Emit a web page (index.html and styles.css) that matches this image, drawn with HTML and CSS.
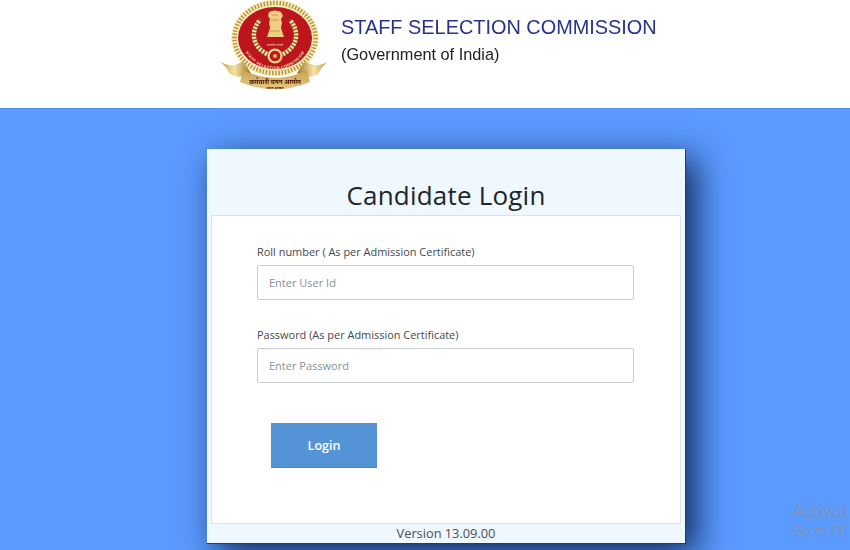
FILE: index.html
```html
<!DOCTYPE html>
<html lang="en">
<head>
<meta charset="utf-8">
<title>Candidate Login</title>
<link rel="stylesheet" href="styles.css">
</head>
<body>
<header class="banner">
  <svg class="emblem" viewBox="0 0 110 92" width="110" height="92" aria-hidden="true">
    <defs>
      <linearGradient id="tailL" x1="0" x2="1" y1="0" y2="0">
        <stop offset="0" stop-color="#c9a04a"/><stop offset=".45" stop-color="#f6e3a6"/><stop offset="1" stop-color="#9c7428"/>
      </linearGradient>
      <linearGradient id="tailR" x1="1" x2="0" y1="0" y2="0">
        <stop offset="0" stop-color="#c9a04a"/><stop offset=".45" stop-color="#f6e3a6"/><stop offset="1" stop-color="#9c7428"/>
      </linearGradient>
      <linearGradient id="band" x1="0" x2="0" y1="0" y2="1">
        <stop offset="0" stop-color="#c9a14e"/><stop offset="1" stop-color="#e6ca84"/>
      </linearGradient>
      <path id="ring" d="M23 38 A33 31 0 0 0 89 38"/>
    </defs>
    <ellipse cx="56" cy="38" rx="44" ry="38.5" fill="#f8ecbd"/>
    <ellipse cx="56" cy="38" rx="40.5" ry="35" fill="none" stroke="#b3963f" stroke-width="4.5" stroke-dasharray="1.5 1.7"/>
    <ellipse cx="56" cy="38" rx="37" ry="31" fill="#bd151c"/>
    <g fill="none" stroke-linecap="round">
      <path d="M40 21 C31 33 34 47 48 54" stroke="#8a5a1e" stroke-width="4.4"/>
      <path d="M72 21 C81 33 78 47 64 54" stroke="#8a5a1e" stroke-width="4.4"/>
      <path d="M40 21 C31 33 34 47 48 54" stroke="#f4e2ae" stroke-width="4.4" stroke-dasharray="2 1.4" stroke-linecap="butt"/>
      <path d="M72 21 C81 33 78 47 64 54" stroke="#f4e2ae" stroke-width="4.4" stroke-dasharray="2 1.4" stroke-linecap="butt"/>
    </g>
    <path d="M50 12 q6 -3 12 0 l2 4 -2 3 1 4 -1 5 3 9 h-17 l3 -9 -1 -5 1 -4 -2 -3z" fill="#f0cf85"/>
    <path d="M53 15 h6 M52 20 h8 M51 31 h10" stroke="#c79a45" stroke-width="1"/>
    <text class="seal" x="56" y="46" text-anchor="middle">सत्यमेव जयते</text>
    <circle cx="56" cy="56" r="7.6" fill="#edd28c"/>
    <circle cx="56" cy="56" r="5.3" fill="#b8181c"/>
    <circle cx="56" cy="56" r="2.1" fill="#e9b24e"/>
    <text class="seal-ring"><textPath href="#ring" startOffset="50%" text-anchor="middle">STAFF SELECTION COMMISSION</textPath></text>
    <path d="M2 62 Q12 69 24 61 L32 73 Q20 80 11 74 Q8 68 2 62z" fill="url(#tailL)"/>
    <path d="M108 62 Q98 69 86 61 L78 73 Q90 80 99 74 Q102 68 108 62z" fill="url(#tailR)"/>
    <path d="M24 70 Q56 86 88 70 L91 82 Q56 97 21 82z" fill="url(#band)"/>
    <text class="motto" x="56" y="84" text-anchor="middle">कर्मचारी चयन आयोग</text>
    <text class="motto-sub" x="56" y="88.5" text-anchor="middle">भारत सरकार</text>
  </svg>
  <div class="org">
    <div class="org-name">STAFF SELECTION COMMISSION</div>
    <div class="org-sub">(Government of India)</div>
  </div>
</header>
<main class="stage">
  <section class="card">
    <h1 class="card-title">Candidate Login</h1>
    <form class="panel">
      <div class="field">
        <label class="field-label" for="uid">Roll number ( As per Admission Certificate)</label>
        <input class="field-input" id="uid" type="text" placeholder="Enter User Id">
      </div>
      <div class="field">
        <label class="field-label" for="pwd">Password (As per Admission Certificate)</label>
        <input class="field-input" id="pwd" type="password" placeholder="Enter Password">
      </div>
      <button class="login" type="button">Login</button>
    </form>
    <footer class="version">Version 13.09.00</footer>
  </section>
</main>
<div class="activate">
  <div class="activate-big">Activat</div>
  <div class="activate-small">Go to PC</div>
</div>
</body>
</html>
```

FILE: styles.css
```css
* { box-sizing: border-box; }
html, body { height: 100%; }
body {
  margin: 0;
  height: 550px;
  overflow: hidden;
  position: relative;
  background: #5b9aff;
  font-family: "Open Sans", sans-serif;
}
.banner {
  height: 109px;
  background: #fff;
  display: flex;
  align-items: flex-start;
  padding-left: 219px;
  border-bottom: 1px solid #4f8fef;
}
.emblem {
  flex: none;
  display: block;
  filter: blur(.4px);
}
.seal { font: 3.4px "Noto Sans", sans-serif; fill: #f4dfa6; }
.seal-ring { font: bold 3.7px "Liberation Sans", sans-serif; fill: #f6e4b4; letter-spacing: .45px; }
.motto { font: bold 6.2px "Noto Sans", "Liberation Sans", sans-serif; fill: #4f140c; }
.motto-sub { font: bold 3.4px "Noto Sans", "Liberation Sans", sans-serif; fill: #4f140c; }
.org {
  margin-left: 12px;
  padding-top: 15px;
  filter: blur(.3px);
}
.org-name {
  font: 19.9px/24px "Liberation Sans", sans-serif;
  color: #27348b;
  white-space: nowrap;
}
.org-sub {
  margin-top: 4px;
  font: 16.3px/22px "Liberation Sans", sans-serif;
  color: #222;
  white-space: nowrap;
}
.stage {
  display: flex;
  justify-content: center;
  padding: 40px 0 0 43px;
}
.card {
  width: 479px;
  height: 395px;
  background: #eff7ff;
  padding: 0 4px;
  box-shadow: 10px 10px 32px rgba(6, 28, 66, .9);
  border-bottom: 1px solid #1f3f6e;
  border-right: 1px solid #1f3f6e;
}
.card-title {
  margin: 0;
  height: 66px;
  padding-top: 28px;
  text-align: center;
  font-size: 26px;
  line-height: 36px;
  font-weight: 400;
  color: #212529;
  letter-spacing: .2px;
}
.panel {
  height: 309px;
  background: #fff;
  border: 1px solid #dfe3e6;
  padding: 28px 45px 0;
}
.field { margin-bottom: 27px; }
.field-label {
  display: block;
  font-size: 10.95px;
  line-height: 16px;
  color: #44494e;
  margin-bottom: 5px;
}
.field-input {
  display: block;
  width: 377px;
  height: 35px;
  padding: 0 11px;
  border: 1px solid #c9ccd0;
  border-radius: 2px;
  background: #fff;
  font: 11px "Open Sans", sans-serif;
  color: #495057;
}
.field-input::placeholder { color: #8a8f94; opacity: 1; }
.login {
  display: block;
  width: 106px;
  height: 45px;
  margin: 40px 0 0 14px;
  border: 0;
  border-bottom: 1px solid #4a86cc;
  background: #5593d7;
  color: #fff;
  font: 600 12.5px "Open Sans", sans-serif;
}
.version {
  text-align: center;
  font-size: 12.8px;
  line-height: 19px;
  color: #495057;
}
.activate {
  position: absolute;
  left: 793px;
  top: 500px;
  white-space: nowrap;
  color: #7f93b5;
}
.activate-big { font-size: 17.6px; line-height: 20px; }
.activate-small { margin-top: 3px; font-size: 13.6px; line-height: 15px; }
```
